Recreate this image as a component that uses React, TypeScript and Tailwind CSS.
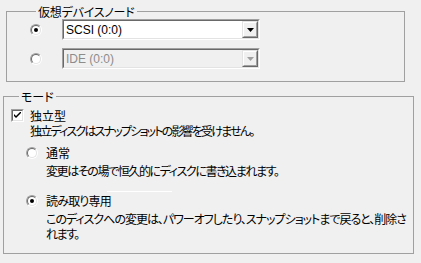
import React from 'react';

const font = "font-['MS_UI_Gothic','Noto_Sans_CJK_JP',sans-serif] [font-feature-settings:'palt']";

function Radio({ checked = false }: { checked?: boolean }) {
  return (
    <span className="flex h-3 w-3 shrink-0 rounded-full border border-t-[#a0a0a0] border-l-[#a0a0a0] border-r-white border-b-white">
      <span className="flex flex-1 items-center justify-center rounded-full border border-t-[#696969] border-l-[#696969] border-r-[#e3e3e3] border-b-[#e3e3e3] bg-white">
        {checked && <span className="h-1 w-1 rounded-full bg-black" />}
      </span>
    </span>
  );
}

function Checkbox({ checked = false }: { checked?: boolean }) {
  return (
    <span className="flex h-[13px] w-[13px] shrink-0 border border-t-[#a0a0a0] border-l-[#a0a0a0] border-r-white border-b-white">
      <span className="flex flex-1 items-center justify-center border border-t-[#696969] border-l-[#696969] border-r-[#e3e3e3] border-b-[#e3e3e3] bg-white">
        {checked && (
          <svg width="7" height="7" viewBox="0 0 7 7">
            <path d="M0 2 L0 4 L2 6 L7 1 L7 -1 L2 4 Z" fill="#000" />
          </svg>
        )}
      </span>
    </span>
  );
}

function Combo({ value, disabled = false }: { value: string; disabled?: boolean }) {
  return (
    <div className="flex h-[21px] w-[198px] border border-t-[#a0a0a0] border-l-[#a0a0a0] border-r-white border-b-white">
      <div
        className={`flex flex-1 items-center border border-t-[#696969] border-l-[#696969] border-r-[#e3e3e3] border-b-[#e3e3e3] ${
          disabled ? 'bg-[#f0f0f0]' : 'bg-white'
        }`}
      >
        <span
          className={`flex-1 pl-[2px] font-['Liberation_Sans',sans-serif] text-[12px] leading-none ${
            disabled ? 'text-[#8c8c8c]' : 'text-black'
          }`}
        >
          {value}
        </span>
        <div className="flex h-full w-4 border border-t-[#e3e3e3] border-l-[#e3e3e3] border-r-[#696969] border-b-[#696969]">
          <div className="flex flex-1 items-center justify-center border border-t-white border-l-white border-r-[#a0a0a0] border-b-[#a0a0a0] bg-[#f0f0f0]">
            <svg width="7" height="4" viewBox="0 0 7 4">
              <path d="M0 0 H7 L3.5 4 Z" fill={disabled ? '#a0a0a0' : '#000'} />
            </svg>
          </div>
        </div>
      </div>
    </div>
  );
}

export default function App() {
  return (
    <div className={`h-[263px] w-[421px] overflow-hidden bg-[#f0f0f0] text-[12px] leading-[15px] text-black ${font}`}>
      {/* 仮想デバイスノード */}
      <fieldset className="ml-[6px] mt-[4px] w-[399px] border border-[#a0a0a0] pb-[12px] pl-[23px]">
        <legend className="ml-[6px] px-[2px] tracking-[-0.2px]">仮想デバイスノード</legend>
        <div className="flex flex-col gap-[8px]">
          <div className="flex items-center gap-[20px]">
            <Radio checked />
            <Combo value="SCSI (0:0)" />
          </div>
          <div className="flex items-center gap-[20px]">
            <Radio />
            <Combo value="IDE (0:0)" disabled />
          </div>
        </div>
      </fieldset>

      {/* モード */}
      <fieldset className="ml-[3px] mt-[7px] h-[165px] w-[411px] border border-[#a0a0a0] pl-[7px]">
        <legend className="ml-[8px] px-[2px]">モード</legend>
        <div className="mt-[4px] flex items-center gap-[6px]">
          <Checkbox checked />
          <span>独立型</span>
        </div>
        <p className="pl-[19px] whitespace-nowrap tracking-[-1.8px]">
          独立ディスクはスナップショットの影響を受けません。
        </p>
        <div className="mt-[7px] flex items-center gap-[8px] pl-[15px]">
          <Radio />
          <span>通常</span>
        </div>
        <p className="mt-[3px] pl-[35px] whitespace-nowrap tracking-[-1.4px]">
          変更はその場で恒久的にディスクに書き込まれます。
        </p>
        <div className="ml-[96px] mt-[13px] h-px w-[65px] bg-white" />
        <div className="mt-[1px] flex items-center gap-[8px] pl-[15px]">
          <Radio checked />
          <span className="tracking-[-0.8px]">読み取り専用</span>
        </div>
        <p className="mt-[3px] pl-[35px] whitespace-nowrap tracking-[-1px]">
          このディスクへの変更は、パワーオフしたり、スナップショットまで戻ると、削除さ
          <br />
          <span className="tracking-[-1.5px]">れます。</span>
        </p>
      </fieldset>
    </div>
  );
}
